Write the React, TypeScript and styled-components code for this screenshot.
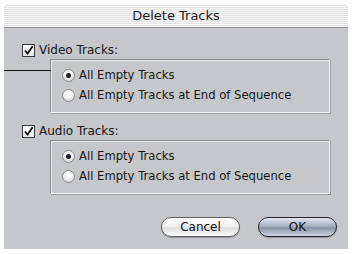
import React from "react";
import styled, { createGlobalStyle } from "styled-components";

const Global = createGlobalStyle`
  html, body { margin: 0; padding: 0; background: #ffffff; }
  body { font-family: "DejaVu Sans", "Liberation Sans", sans-serif; }
`;

const Page = styled.div`
  padding: 4px 6px 5px 4px;
  width: 354px;
  height: 254px;
  box-sizing: border-box;
`;

const Window = styled.div`
  width: 344px;
  height: 245px;
  display: flex;
  flex-direction: column;
  background: #c5c7ca;
  border-radius: 5px 5px 0 0;
  overflow: hidden;
`;

const TitleBar = styled.div`
  height: 23px;
  flex: none;
  display: flex;
  align-items: center;
  justify-content: center;
  background: repeating-linear-gradient(
    to bottom,
    #f7f7f7 0px,
    #f7f7f7 1px,
    #e4e4e4 1px,
    #e4e4e4 2px
  );
  border-bottom: 1px solid #8e8e8e;
  font-size: 13px;
  color: #1c1c1c;
`;

const Body = styled.div`
  flex: 1;
  display: flex;
  flex-direction: column;
  padding: 15px 0 0 18px;
`;

const Section = styled.div`
  display: flex;
  flex-direction: column;
  gap: 2px;
  margin-bottom: 11px;
`;

const CheckRow = styled.label`
  display: flex;
  align-items: center;
  gap: 4px;
  font-size: 12px;
  color: #161616;
  height: 14px;
`;

const CheckBox = styled.span`
  width: 11px;
  height: 11px;
  border: 1px solid #3a3a3a;
  background: linear-gradient(#ffffff, #e8e8e8);
  display: flex;
  align-items: center;
  justify-content: center;
  box-sizing: content-box;
`;

const Group = styled.div`
  position: relative;
  margin-left: 28px;
  width: 280px;
  height: 54px;
  box-sizing: border-box;
  border-top: 1px solid #8a8a8c;
  border-left: 1px solid #8a8a8c;
  border-right: 1px solid #f4f4f4;
  border-bottom: 1px solid #f4f4f4;
  box-shadow: inset 1px 1px 0 #e6e7e9, 1px 1px 0 #9c9c9e;
  display: flex;
  flex-direction: column;
  padding: 8px 0 0 11px;
  gap: 6px;
`;

const Callout = styled.div`
  position: absolute;
  left: -51px;
  top: 10px;
  width: 51px;
  height: 1px;
  background: #111;
`;

const RadioRow = styled.div`
  display: flex;
  align-items: center;
  gap: 4px;
  font-size: 11.6px;
  color: #161616;
  height: 14px;
`;

const Radio = styled.span<{ $on?: boolean }>`
  width: 11px;
  height: 11px;
  border-radius: 50%;
  border: 1px solid #8d8d8d;
  background: radial-gradient(circle at 50% 35%, #ffffff 0%, #f2f2f2 45%, #c4c4c4 100%);
  display: flex;
  align-items: center;
  justify-content: center;
  &::after {
    content: "";
    display: ${(p) => (p.$on ? "block" : "none")};
    width: 5px;
    height: 5px;
    border-radius: 50%;
    background: #1d1d2a;
  }
`;

const ButtonRow = styled.div`
  display: flex;
  justify-content: flex-end;
  gap: 18px;
  padding-right: 11px;
  margin-top: auto;
  margin-bottom: 12px;
`;

const Button = styled.button<{ $default?: boolean }>`
  width: 79px;
  height: 20px;
  border-radius: 10px;
  font-family: "DejaVu Sans", "Liberation Sans", sans-serif;
  font-size: 12px;
  color: #111;
  padding: 0;
  border: 1px solid ${(p) => (p.$default ? "#23262f" : "#5f5f62")};
  background: ${(p) =>
    p.$default
      ? "linear-gradient(#e3e6ee 0%, #a9afc0 45%, #8a92a6 55%, #cfd4de 100%)"
      : "linear-gradient(#ffffff 0%, #f1f1f1 45%, #dedede 55%, #fbfbfb 100%)"};
  box-shadow: 0 1px 1px rgba(0, 0, 0, 0.25);
`;

function Check() {
  return (
    <CheckBox>
      <svg width="11" height="11" viewBox="0 0 11 11">
        <path d="M2 5.5 L4.6 8.6 L9.6 1.2" fill="none" stroke="#111" strokeWidth="1.8" />
      </svg>
    </CheckBox>
  );
}

function TrackSection({ label, callout }: { label: string; callout?: boolean }) {
  return (
    <Section>
      <CheckRow>
        <Check />
        {label}
      </CheckRow>
      <Group>
        {callout && <Callout />}
        <RadioRow>
          <Radio $on />
          All Empty Tracks
        </RadioRow>
        <RadioRow>
          <Radio />
          All Empty Tracks at End of Sequence
        </RadioRow>
      </Group>
    </Section>
  );
}

export default function App() {
  return (
    <>
      <Global />
      <Page>
        <Window>
          <TitleBar>Delete Tracks</TitleBar>
          <Body>
            <TrackSection label="Video Tracks:" callout />
            <TrackSection label="Audio Tracks:" />
            <ButtonRow>
              <Button>Cancel</Button>
              <Button $default>OK</Button>
            </ButtonRow>
          </Body>
        </Window>
      </Page>
    </>
  );
}
